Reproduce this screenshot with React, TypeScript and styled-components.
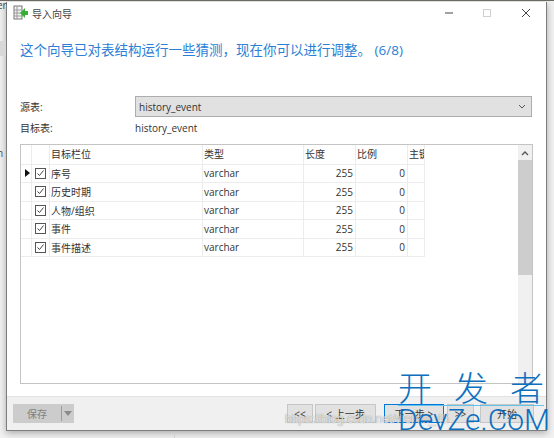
import styled, {createGlobalStyle} from 'styled-components';

const GlobalStyle = createGlobalStyle`
  html, body {
    margin: 0;
    padding: 0;
    background: #f1f1f1;
  }
  body {
    font-family: "Open Sans", "Noto Sans CJK SC", sans-serif;
    color: #333;
    font-size: 10px;
  }
`;

const COLUMNS = '11px 18px 153px 101px 52px 52px 17px';

const Page = styled('div')`
  position: relative;
  width: 554px;
  height: 438px;
  overflow: hidden;
  padding: 1px 0 0 6px;
  box-sizing: border-box;
  border-top: 1px solid #6d6a62;
`;

const BehindText = styled('span')<{$top: number}>`
  position: absolute;
  left: -3px;
  top: ${p => p.$top}px;
  font-size: 10px;
  color: #444;
`;

const BehindBlock = styled('div')`
  position: absolute;
  left: 0;
  top: 40px;
  width: 6px;
  height: 15px;
  background: #d8d8d8;
`;

const BehindLine = styled('div')`
  position: absolute;
  left: 174px;
  top: 431px;
  width: 1px;
  height: 7px;
  background: #cfcfcf;
`;

const Window = styled('div')`
  width: 541px;
  height: 429px;
  display: flex;
  flex-direction: column;
  background: #fff;
  border: 1px solid #7d7d7d;
  border-top: 0;
  box-sizing: border-box;
  box-shadow: 0 2px 7px rgba(0, 0, 0, 0.3);
`;

const TitleBar = styled('div')`
  height: 22px;
  display: flex;
  align-items: center;
  padding-left: 6px;
  flex: none;
`;

const TitleText = styled('span')`
  margin-left: 3px;
  font-size: 10px;
  color: #444;
`;

const WindowControls = styled('div')`
  margin-left: auto;
  display: flex;
  align-items: center;
  padding-right: 1px;
`;

const WindowControl = styled('div')<{$dim?: boolean}>`
  width: 38.5px;
  height: 22px;
  display: flex;
  align-items: center;
  justify-content: center;
  color: ${p => (p.$dim ? '#d0d0d0' : '#444')};
`;

const Heading = styled('h1')`
  margin: 15px 0 0 13px;
  font-size: 13.5px;
  line-height: 22px;
  font-weight: 400;
  color: #2b7fd6;
  white-space: nowrap;
`;

const FormRow = styled('div')`
  display: flex;
  align-items: center;
  padding: 0 13px;
`;

const SourceRow = styled(FormRow)`
  margin-top: 35px;
`;

const TargetRow = styled(FormRow)`
  margin-top: 1px;
  height: 19px;
`;

const FieldLabel = styled('label')`
  width: 115px;
  font-size: 10px;
  color: #333;
`;

const Combo = styled('div')`
  width: 397px;
  height: 21px;
  display: flex;
  align-items: center;
  justify-content: space-between;
  box-sizing: border-box;
  padding: 0 5px 0 3px;
  background: #e1e1e1;
  border: 1px solid #adadad;
  font-size: 10px;
  color: #333;
`;

const GridPanel = styled('div')`
  position: relative;
  flex: none;
  height: 240px;
  margin: 7px 13px 0;
  border: 1px solid #c4c4c4;
  display: flex;
  justify-content: space-between;
  box-sizing: border-box;
`;

const Table = styled('div')`
  display: flex;
  flex-direction: column;
`;

const TableRow = styled('div')`
  display: grid;
  grid-template-columns: ${COLUMNS};
  height: 18.5px;
`;

const HeaderRow = styled(TableRow)`
  height: 19.5px;
`;

const Cell = styled('div')<{$right?: boolean}>`
  display: flex;
  align-items: center;
  justify-content: ${p => (p.$right ? 'flex-end' : 'flex-start')};
  box-sizing: border-box;
  padding: 0 ${p => (p.$right ? '2px' : '1px')} 0 1px;
  border-right: 1px solid #ececec;
  border-bottom: 1px solid #ececec;
  font-size: 10px;
  color: #333;
  overflow: hidden;
  white-space: nowrap;
`;

const HeaderCell = styled(Cell)`
  padding-bottom: 2px;
`;

const CheckCell = styled(Cell)`
  justify-content: center;
`;

const CheckBox = styled('div')`
  width: 11px;
  height: 11px;
  display: flex;
  align-items: center;
  justify-content: center;
  border: 1px solid #555;
  box-sizing: border-box;
  background: #fff;
`;

const Pointer = styled('div')`
  width: 0;
  height: 0;
  margin-left: 3px;
  border-left: 5px solid #111;
  border-top: 4.5px solid transparent;
  border-bottom: 4.5px solid transparent;
`;

const ScrollBar = styled('div')`
  width: 14px;
  display: flex;
  flex-direction: column;
  background: #f0f0f0;
`;

const ScrollArrow = styled('div')`
  height: 15px;
  display: flex;
  align-items: center;
  justify-content: center;
  color: #555;
`;

const ScrollThumb = styled('div')`
  height: 115px;
  background: #cdcdcd;
`;

const Footer = styled('div')`
  margin-top: auto;
  height: 34px;
  display: flex;
  align-items: flex-start;
  padding: 7px 12px 0 6px;
  box-sizing: border-box;
  background: #f0f0f0;
  border-top: 1px solid #e3e3e3;
`;

const SaveButton = styled('div')`
  width: 61px;
  height: 19px;
  display: flex;
  align-items: center;
  background: #cccccc;
  color: #808080;
  font-size: 10px;
`;

const SaveLabel = styled('span')`
  width: 48px;
  text-align: center;
  border-right: 1px solid #9c9c9c;
`;

const SaveArrow = styled('span')`
  width: 0;
  height: 0;
  margin-left: 2px;
  border-top: 5px solid #8a8a8a;
  border-left: 4.5px solid transparent;
  border-right: 4.5px solid transparent;
`;

const NavGroup = styled('div')`
  margin-left: auto;
  display: flex;
`;

const NavButton = styled('div')<{$width: number; $gap: number; $focus?: boolean}>`
  width: ${p => p.$width}px;
  height: 19px;
  margin-left: ${p => p.$gap}px;
  display: flex;
  align-items: center;
  justify-content: center;
  box-sizing: border-box;
  background: #e1e1e1;
  border: 1px solid ${p => (p.$focus ? '#0078d7' : '#c6c6c6')};
  font-size: 10px;
  color: #333;
  white-space: nowrap;
`;

const CsdnMark = styled('div')`
  position: absolute;
  left: 285px;
  top: 411px;
  font-family: "Liberation Sans", sans-serif;
  font-size: 12px;
  color: rgba(255, 255, 255, 0.75);
  text-shadow: 0 0 1px rgba(90, 90, 90, 0.8);
  white-space: nowrap;
`;

const DevMark = styled('div')`
  position: absolute;
  left: 398px;
  top: 370px;
  width: 146px;
  color: #0e6fbe;
  text-align: center;
`;

const DevTitle = styled('div')`
  display: flex;
  justify-content: space-between;
  font-size: 34px;
  line-height: 34px;
  font-weight: 300;
`;

const DevRule = styled('div')`
  height: 1px;
  background: #63c3ea;
`;

const DevName = styled('div')`
  font-family: Roboto, sans-serif;
  font-weight: 300;
  font-size: 30px;
  line-height: 28px;
  white-space: nowrap;
`;

const FIELDS = ['序号', '历史时期', '人物/组织', '事件', '事件描述'];

const ImportIcon = () => (
  <svg width="16" height="16" viewBox="0 0 16 16">
    <rect x="1" y="1" width="8" height="13" fill="#f4f4f4" stroke="#777" />
    <path d="M1 5h8M1 8h8M1 11h8M4 1v13" stroke="#999" />
    <path d="M7 8l5-5v3h3v4h-3v3z" fill="#35b034" />
  </svg>
);

const Tick = () => (
  <svg width="9" height="9" viewBox="0 0 9 9">
    <path d="M1.5 4.5l2 2 4-5" fill="none" stroke="#444" strokeWidth="1" />
  </svg>
);

const App = () => {
  return (
    <Page>
      <GlobalStyle />
      <BehindText $top={-3}>er</BehindText>
      <BehindText $top={145}>h</BehindText>
      <BehindBlock />
      <BehindLine />
      <Window>
        <TitleBar>
          <ImportIcon />
          <TitleText>导入向导</TitleText>
          <WindowControls>
            <WindowControl>
              <svg width="10" height="10" viewBox="0 0 10 10">
                <path d="M1 5h8" stroke="currentColor" />
              </svg>
            </WindowControl>
            <WindowControl $dim>
              <svg width="10" height="10" viewBox="0 0 10 10">
                <rect x="1.5" y="1.5" width="7" height="7" fill="none" stroke="currentColor" />
              </svg>
            </WindowControl>
            <WindowControl>
              <svg width="10" height="10" viewBox="0 0 10 10">
                <path d="M1 1l8 8M9 1l-8 8" stroke="currentColor" />
              </svg>
            </WindowControl>
          </WindowControls>
        </TitleBar>
        <Heading>这个向导已对表结构运行一些猜测，现在你可以进行调整。 (6/8)</Heading>
        <SourceRow>
          <FieldLabel>源表:</FieldLabel>
          <Combo>
            history_event
            <svg width="8" height="6" viewBox="0 0 8 6">
              <path d="M1 1l3 3 3-3" fill="none" stroke="#555" />
            </svg>
          </Combo>
        </SourceRow>
        <TargetRow>
          <FieldLabel>目标表:</FieldLabel>
          <span>history_event</span>
        </TargetRow>
        <GridPanel>
          <Table>
            <HeaderRow>
              <HeaderCell />
              <HeaderCell />
              <HeaderCell>目标栏位</HeaderCell>
              <HeaderCell>类型</HeaderCell>
              <HeaderCell>长度</HeaderCell>
              <HeaderCell>比例</HeaderCell>
              <HeaderCell>主键</HeaderCell>
            </HeaderRow>
            {FIELDS.map((name, i) => (
              <TableRow key={name}>
                <Cell>{i === 0 && <Pointer />}</Cell>
                <CheckCell>
                  <CheckBox>
                    <Tick />
                  </CheckBox>
                </CheckCell>
                <Cell>{name}</Cell>
                <Cell>varchar</Cell>
                <Cell $right>255</Cell>
                <Cell $right>0</Cell>
                <Cell />
              </TableRow>
            ))}
          </Table>
          <ScrollBar>
            <ScrollArrow>
              <svg width="8" height="6" viewBox="0 0 8 6">
                <path d="M1 5l3-3 3 3" fill="none" stroke="currentColor" strokeWidth="1.3" />
              </svg>
            </ScrollArrow>
            <ScrollThumb />
          </ScrollBar>
        </GridPanel>
        <Footer>
          <SaveButton>
            <SaveLabel>保存</SaveLabel>
            <SaveArrow />
          </SaveButton>
          <NavGroup>
            <NavButton $width={26} $gap={0}>{'<<'}</NavButton>
            <NavButton $width={61} $gap={2}>{'< 上一步'}</NavButton>
            <NavButton $width={60} $gap={8} $focus>{'下一步 >'}</NavButton>
            <NavButton $width={27} $gap={3}>{'>>'}</NavButton>
            <NavButton $width={54} $gap={6}>开始</NavButton>
          </NavGroup>
        </Footer>
      </Window>
      <CsdnMark>https://blog.csdn.net/weixin_45</CsdnMark>
      <DevMark>
        <DevTitle>
          <span>开</span>
          <span>发</span>
          <span>者</span>
        </DevTitle>
        <DevRule />
        <DevName>DevZe.CoM</DevName>
      </DevMark>
    </Page>
  );
};

export default App;
